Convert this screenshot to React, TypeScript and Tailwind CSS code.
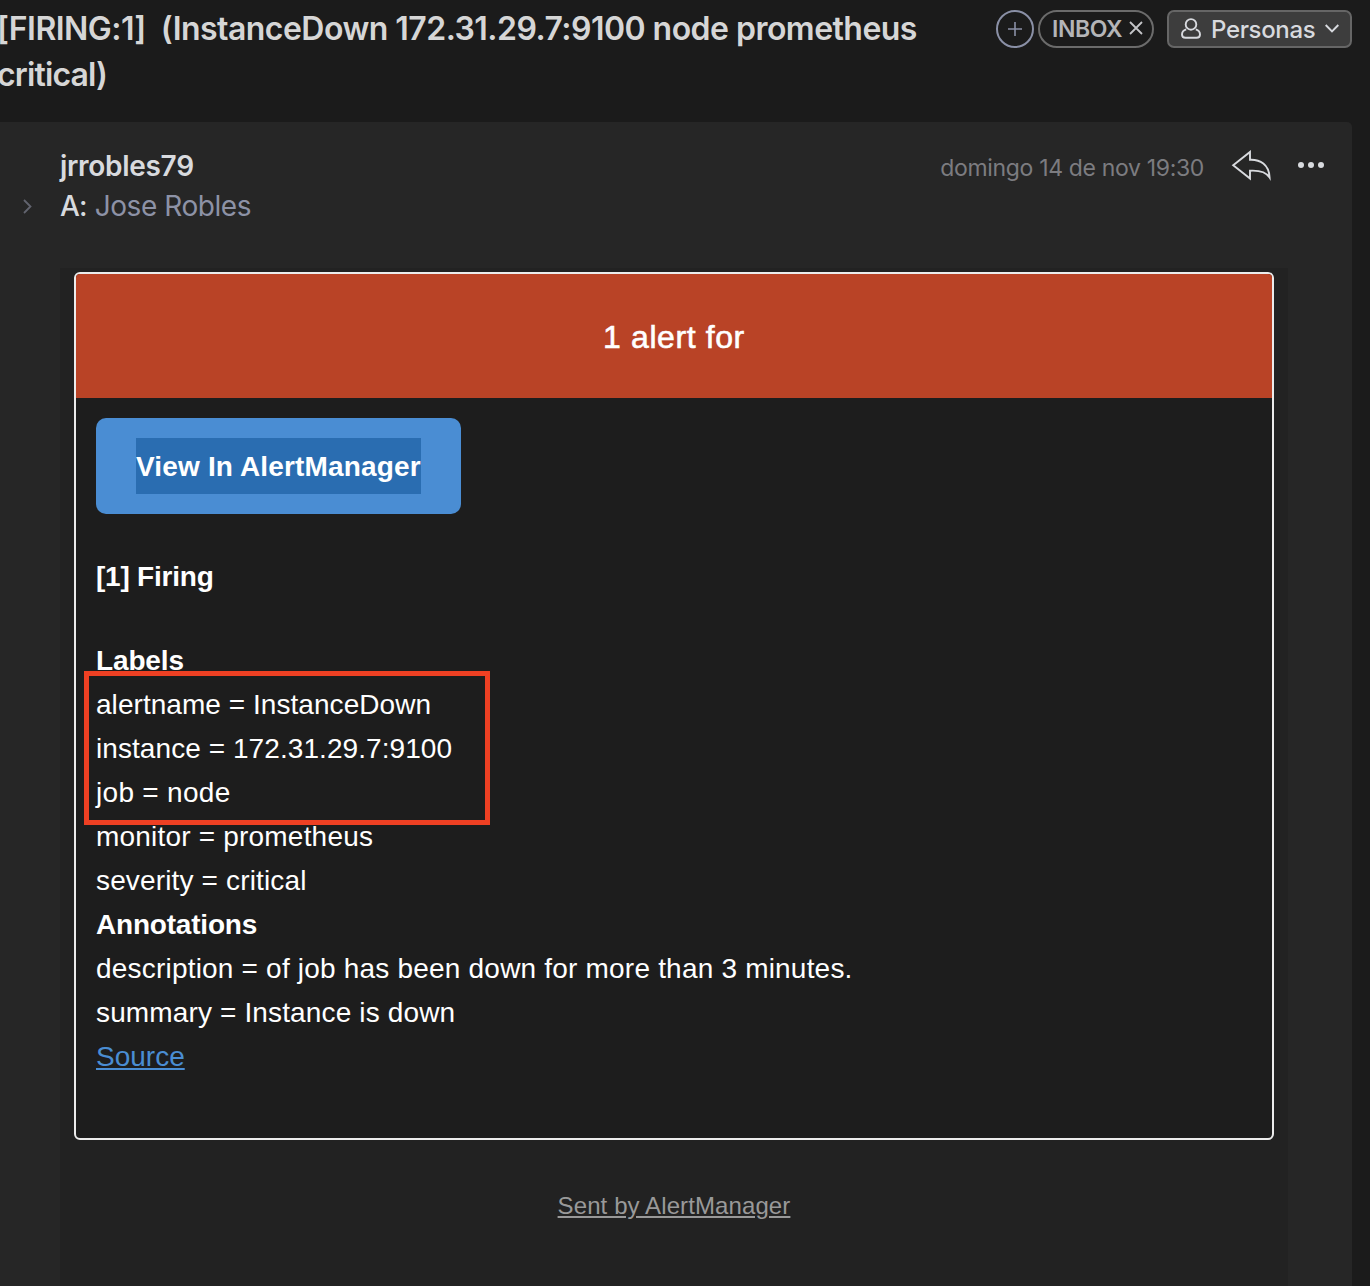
import type { ReactNode } from "react";

function Row({ children, className = "" }: { children: ReactNode; className?: string }) {
  return (
    <div className="h-11 leading-[46px] whitespace-pre">
      <span className={className}>{children}</span>
    </div>
  );
}

function Toolbar() {
  return (
    <div className="mt-2.5 mr-[18px] flex h-[38px] shrink-0">
      <button className="flex size-[38px] items-center justify-center rounded-full border-2 border-[#8a90a6]">
        <svg width="14" height="14" viewBox="0 0 14 14" fill="none" stroke="#8a90a6" strokeWidth="1.6">
          <path d="M7 0v14M0 7h14" />
        </svg>
      </button>
      <div className="ml-1 flex h-[38px] w-[116px] items-center rounded-full border-2 border-[#6b6b6b] pl-3 text-[#b4b5b8]">
        <span className="w-[70px] text-[23px] leading-8 font-semibold tracking-[-0.4px]">INBOX</span>
        <svg className="mb-0.5 ml-[7px]" width="14" height="14" viewBox="0 0 14 14" fill="none" stroke="#c4c5c8" strokeWidth="1.8">
          <path d="M1 1l12 12M13 1L1 13" />
        </svg>
      </div>
      <button className="ml-[13px] flex h-[38px] w-[185px] items-center rounded-[7px] border-2 border-[#666] bg-[#3d3d3d] pl-3 text-[#d8dadf]">
        <svg className="mb-0.5" width="20" height="21" viewBox="0 0 20 21" fill="none" stroke="currentColor" strokeWidth="1.9">
          <circle cx="10" cy="6.4" r="5.3" />
          <path d="M5.2 11.400C2.600 12.200 1 14 1 16.400C1 18.800 2.500 19.700 4.500 19.700H15.500C17.500 19.700 19 18.800 19 16.400C19 14 17.400 12.200 14.800 11.400" />
        </svg>
        <span className="mt-0.5 ml-2.5 w-[104px] text-left text-[24px] leading-8 font-medium tracking-[-0.35px]">Personas</span>
        <svg className="mb-0.5 ml-2.5" width="14" height="9" viewBox="0 0 14 9" fill="none" stroke="currentColor" strokeWidth="1.9">
          <path d="M.7 1L7 7.500L13.300 1" />
        </svg>
      </button>
    </div>
  );
}

function MessageHeader() {
  return (
    <div className="flex h-[146px] items-start">
      <svg className="mt-[77px] ml-[23px] shrink-0" width="9" height="15" viewBox="0 0 9 15" fill="none" stroke="#62646f" strokeWidth="1.8">
        <path d="M1 1l6.500 6.500L1 14" />
      </svg>
      <div className="ml-7 pt-6 text-[28px] leading-10">
        <div className="font-semibold text-[#d8dade]">
          <span className="tracking-[-0.3px]">jrrobles79</span>
        </div>
        <div className="text-[#8d92a6]">
          <span className="font-medium tracking-[-0.8px] text-[#d8dade]">A:</span>
          <span className="ml-2 tracking-[-0.45px]">Jose Robles</span>
        </div>
      </div>
      <div className="mt-[30px] ml-auto text-[23px] leading-8 text-[#7c7c80]">
        <span className="tracking-[-0.34px]">domingo 14 de nov 19:30</span>
      </div>
      <svg className="mt-7 ml-[27px]" width="41" height="31" viewBox="0 0 41 31" fill="none" stroke="#d8dade" strokeWidth="1.9" strokeLinejoin="miter">
        <path d="M2.200 15.200L19 1.900V9.800C29 9.400 38 14.200 38.600 27.500C34.500 21.200 27.500 20.200 19 20.700V28.600Z" />
      </svg>
      <svg className="mt-10 mr-[27px] ml-[25px]" width="28" height="7" viewBox="0 0 28 7" fill="#d8dade">
        <circle cx="4" cy="3.100" r="3" />
        <circle cx="14" cy="3.100" r="3" />
        <circle cx="24" cy="3.100" r="3" />
      </svg>
    </div>
  );
}

function AlertCard() {
  return (
    <div className="h-[868px] overflow-hidden rounded-md border-2 border-[#ececec] bg-[#1d1d1d]">
      <div className="flex h-[124px] items-center justify-center bg-[#b94326] pt-0.5 text-[32px]">
        <span className="tracking-[0.6px] [-webkit-text-stroke:0.6px_white]">1 alert for</span>
      </div>
      <div className="px-5 pt-5">
        <a className="flex h-24 w-[365px] items-center justify-center rounded-[10px] bg-[#4a8dd3] font-bold">
          <span className="flex h-14 w-[285px] items-center bg-[#2a6db1] pt-0.5 tracking-[0.16px] whitespace-nowrap">View In AlertManager</span>
        </a>
        <div className="mt-10">
          <Row className="font-bold tracking-[-0.22px]">[1] Firing</Row>
        </div>
        <div className="relative mt-10">
          <Row className="font-bold tracking-[-0.15px]">Labels</Row>
          <Row className="tracking-[0.05px]">alertname = InstanceDown</Row>
          <Row className="tracking-[0.07px]">instance = 172.31.29.7:9100</Row>
          <Row className="tracking-[0.3px]">job = node</Row>
          <Row className="tracking-[0.2px]">monitor = prometheus</Row>
          <Row className="tracking-[0.15px]">severity = critical</Row>
          <Row className="font-bold tracking-[-0.2px]">Annotations</Row>
          <Row className="tracking-[0.2px]">description = of job has been down for more than 3 minutes.</Row>
          <Row className="tracking-[0.14px]">summary = Instance is down</Row>
          <Row className="text-[#4a8dd3] underline decoration-2 underline-offset-2">Source</Row>
          <div className="absolute top-[33px] -left-3 h-[154px] w-[406px] border-[5px] border-[#ee4023]" />
        </div>
      </div>
    </div>
  );
}

export default function App() {
  return (
    <div className="h-[1286px] w-[1370px] overflow-hidden bg-[#1b1b1b] font-['Inter',sans-serif]">
      <header className="flex h-[122px] items-start justify-between">
        <h1 className="pt-1.5 text-[32px] leading-[46px] font-semibold whitespace-pre text-[#d6d6d6]">
          <div className="-ml-[3px] tracking-[-0.53px]">{"[FIRING:1]  (InstanceDown 172.31.29.7:9100 node prometheus"}</div>
          <div className="-ml-[3px] tracking-[-0.85px]">critical)</div>
        </h1>
        <Toolbar />
      </header>
      <main className="h-[1164px] w-[1352px] rounded-tr-[5px] bg-[#262626]">
        <MessageHeader />
        <section className="ml-[60px] h-[1018px] w-[1228px] bg-[#222] px-3.5 pt-1 font-['Liberation_Sans',sans-serif] text-[28px] text-white">
          <AlertCard />
          <div className="mt-12 text-center text-[24px] leading-9 text-[#999]">
            <span className="tracking-[0.1px] underline decoration-2 underline-offset-2">Sent by AlertManager</span>
          </div>
        </section>
      </main>
    </div>
  );
}
